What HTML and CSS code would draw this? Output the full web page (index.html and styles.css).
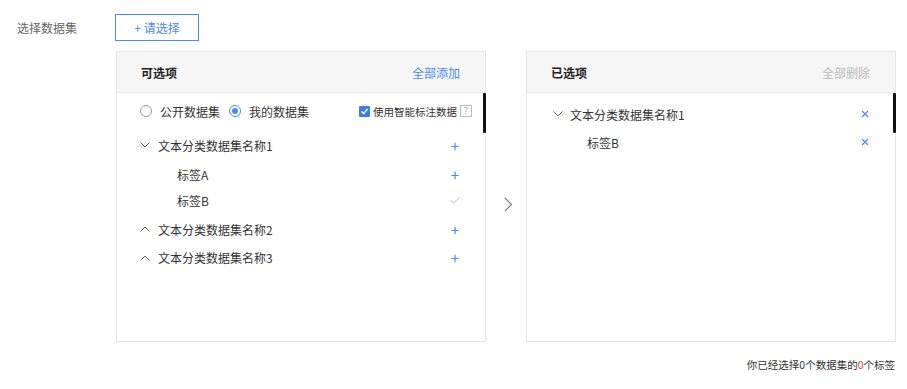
FILE: index.html
```html
<!DOCTYPE html>
<html lang="zh">
<head>
    <meta charset="UTF-8">
    <title>选择数据集</title>
    <link rel="stylesheet" href="styles.css">
</head>
<body>
    <div class="form-row">
        <div class="form-label">选择数据集</div>
        <button class="select-btn">+ 请选择</button>
    </div>

    <div class="transfer">
        <div class="panel">
            <div class="panel-head">
                <span class="panel-title">可选项</span>
                <span class="head-action">全部添加</span>
            </div>
            <div class="panel-body">
                <div class="scroll-thumb"></div>
                <div class="filter-row">
                    <label class="radio"><span class="radio-dot"></span>公开数据集</label>
                    <label class="radio"><span class="radio-dot checked"></span>我的数据集</label>
                    <span class="smart">
                        <span class="check-box">
                            <svg width="9" height="9" viewBox="0 0 9 9"><path d="M1.5 4.6 L3.6 6.6 L7.6 2" fill="none" stroke="#fff" stroke-width="1.4"/></svg>
                        </span>
                        使用智能标注数据
                        <span class="help">?</span>
                    </span>
                </div>

                <div class="tree">
                    <div class="node">
                        <svg class="caret" width="10" height="6" viewBox="0 0 10 6"><path d="M0.5 0.5 L5 5 L9.5 0.5" fill="none" stroke="#666" stroke-width="1"/></svg>
                        <span class="node-text">文本分类数据集名称1</span>
                        <span class="plus">+</span>
                    </div>
                    <div class="children">
                        <div class="leaf">
                            <span class="node-text">标签A</span>
                            <span class="plus">+</span>
                        </div>
                        <div class="leaf">
                            <span class="node-text">标签B</span>
                            <svg class="done" width="10" height="7" viewBox="0 0 10 7"><path d="M0.5 3.5 L3.5 6 L9.5 0.5" fill="none" stroke="#bbb" stroke-width="1"/></svg>
                        </div>
                    </div>
                    <div class="node">
                        <svg class="caret" width="10" height="6" viewBox="0 0 10 6"><path d="M0.5 5.5 L5 1 L9.5 5.5" fill="none" stroke="#666" stroke-width="1"/></svg>
                        <span class="node-text">文本分类数据集名称2</span>
                        <span class="plus">+</span>
                    </div>
                    <div class="node">
                        <svg class="caret" width="10" height="6" viewBox="0 0 10 6"><path d="M0.5 5.5 L5 1 L9.5 5.5" fill="none" stroke="#666" stroke-width="1"/></svg>
                        <span class="node-text">文本分类数据集名称3</span>
                        <span class="plus">+</span>
                    </div>
                </div>
            </div>
        </div>

        <div class="transfer-arrow">
            <svg width="9" height="15" viewBox="0 0 9 15"><path d="M1 1 L7.5 7.5 L1 14" fill="none" stroke="#777" stroke-width="1.2"/></svg>
        </div>

        <div class="panel">
            <div class="panel-head">
                <span class="panel-title">已选项</span>
                <span class="head-action muted">全部删除</span>
            </div>
            <div class="panel-body selected">
                <div class="scroll-thumb"></div>
                <div class="node">
                    <svg class="caret" width="10" height="6" viewBox="0 0 10 6"><path d="M0.5 0.5 L5 5 L9.5 0.5" fill="none" stroke="#666" stroke-width="1"/></svg>
                    <span class="node-text">文本分类数据集名称1</span>
                    <svg class="remove" width="8" height="8" viewBox="0 0 8 8"><path d="M1 1 L7 7 M7 1 L1 7" stroke="#4a8af4" stroke-width="1.2"/></svg>
                </div>
                <div class="leaf">
                    <span class="node-text">标签B</span>
                    <svg class="remove" width="8" height="8" viewBox="0 0 8 8"><path d="M1 1 L7 7 M7 1 L1 7" stroke="#4a8af4" stroke-width="1.2"/></svg>
                </div>
            </div>
        </div>
    </div>

    <div class="summary">你已经选择0个数据集的<span class="red">0</span>个标签</div>
</body>
</html>
```

FILE: styles.css
```css
body { margin: 0; font-family: "Noto Sans CJK SC", "Noto Sans", sans-serif; font-size: 12px; color: #333; background: #fff; }

.form-row { display: flex; align-items: center; padding: 14px 0 0 17px; }
.form-label { width: 98px; color: #666; font-size: 12px; }
.select-btn { width: 84px; height: 27px; border: 1px solid #4a8af4; background: #fff; color: #4a8af4; font-family: inherit; font-size: 12px; padding: 0; border-radius: 0; }

.transfer { display: flex; margin: 10px 0 0 116px; }
.panel { width: 368px; height: 289px; border: 1px solid #e6e6e6; display: flex; flex-direction: column; }
.panel-head { height: 40px; background: #f6f6f6; border-bottom: 1px solid #e6e6e6; display: flex; align-items: center; justify-content: space-between; padding: 0 25px 0 24px; }
.panel-title { font-weight: bold; color: #222; }
.head-action { color: #4a8af4; }
.head-action.muted { color: #bbb; }
.panel-body { position: relative; flex: 1; padding: 8px 25px 0 23px; }
.scroll-thumb { position: absolute; right: -1px; top: 0; width: 3px; height: 40px; background: #111; border-radius: 1px; }

.filter-row { display: flex; align-items: center; height: 20px; }
.radio { display: flex; align-items: center; margin-right: 9px; }
.radio-dot { width: 12px; height: 12px; border: 1px solid #999; border-radius: 50%; margin-right: 8px; box-sizing: border-box; position: relative; }
.radio-dot.checked { border-color: #4a8af4; }
.radio-dot.checked::after { content: ""; position: absolute; left: 2px; top: 2px; width: 6px; height: 6px; border-radius: 50%; background: #4a8af4; }
.smart { margin-left: auto; display: flex; align-items: center; font-size: 10.5px; margin-right: -12px; }
.check-box { width: 11px; height: 11px; background: #3b7ee8; border-radius: 1px; display: flex; align-items: center; justify-content: center; margin-right: 3px; }
.help { width: 10px; height: 10px; border: 1px solid #bbb; color: #999; font-size: 9px; line-height: 10px; text-align: center; margin-left: 3px; }

.tree { margin-top: 10px; }
.node { display: flex; align-items: center; height: 28px; }
.node + .node { height: 29px; }
.caret { margin: 0 8px 0 0; }
.node-text { flex: 1; }
.plus { color: #4a8af4; font-size: 15px; line-height: 1; width: 10px; text-align: center; }
.children { padding: 2px 0 2px; }
.leaf { display: flex; align-items: center; height: 26px; padding-left: 37px; }

.transfer-arrow { width: 40px; display: flex; align-items: center; justify-content: center; padding: 16px 0 0 4px; box-sizing: border-box; }

.selected { padding: 7px 26px 0 26px; }
.selected .node { height: 28px; }
.selected .caret { margin-right: 7px; }
.selected .leaf { height: 28px; padding-left: 34px; }

.summary { text-align: right; padding: 15px 12px 0 0; font-size: 10.5px; color: #333; }
.red { color: #e53935; }
```
